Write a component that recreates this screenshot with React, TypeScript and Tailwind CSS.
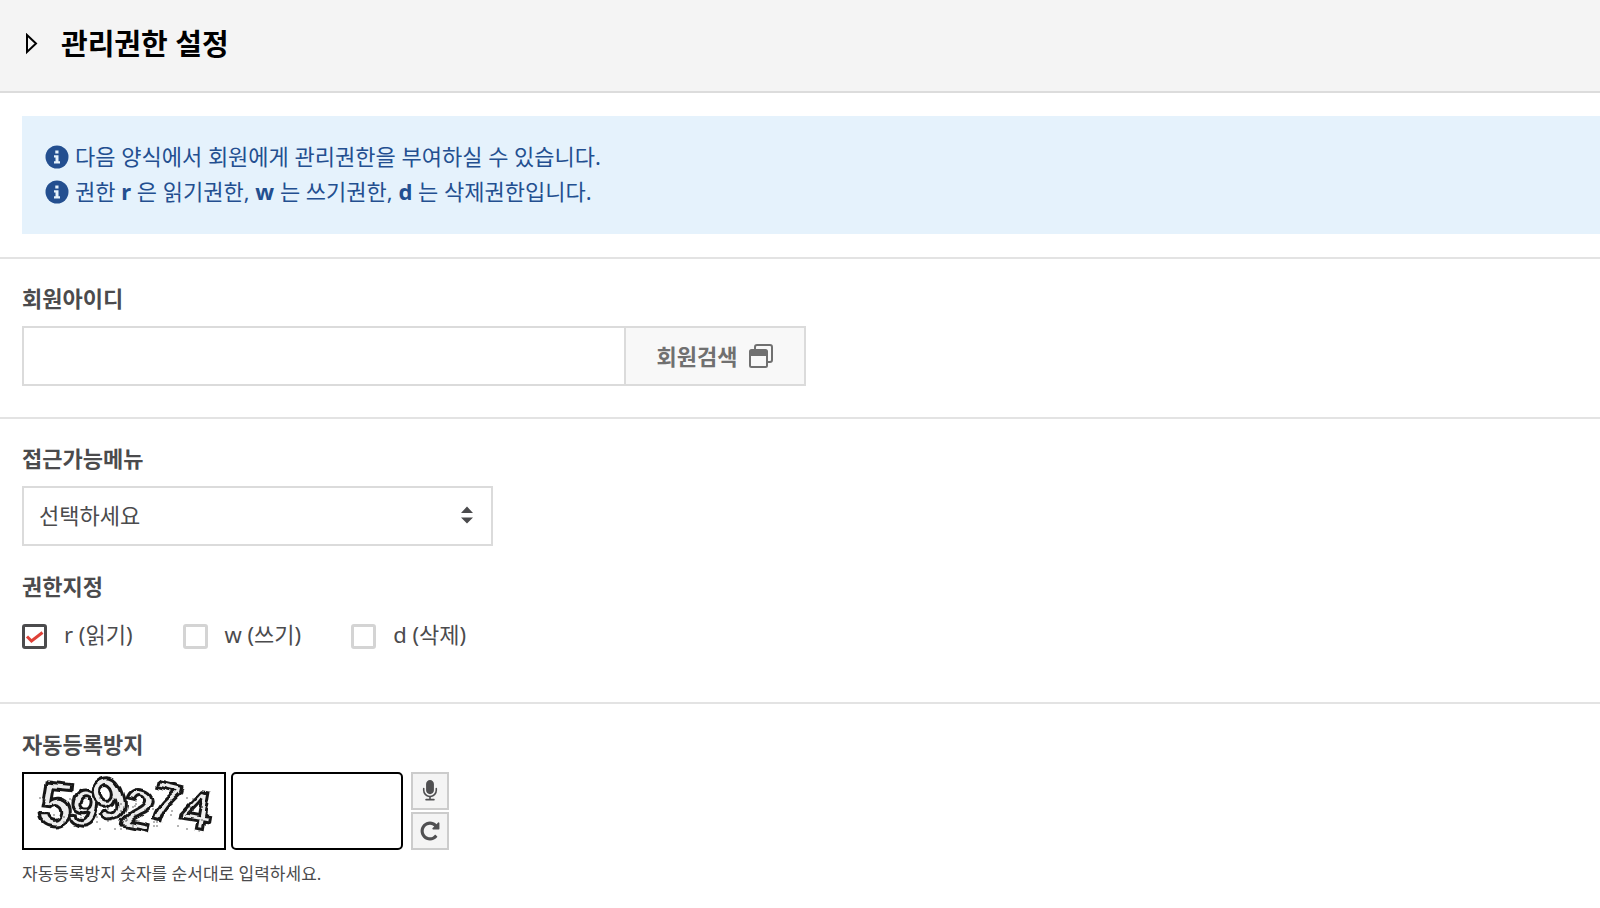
import { useState } from "react";
import type { ReactNode } from "react";

const PERMISSIONS = [
  { key: "r", label: "r (읽기)" },
  { key: "w", label: "w (쓰기)" },
  { key: "d", label: "d (삭제)" },
];

const DIGITS = [
  { ch: "5", x: 15, y: 51, size: 60, rotate: 6 },
  { ch: "9", x: 46, y: 52, size: 50, rotate: 16 },
  { ch: "9", x: 70, y: 46, size: 60, rotate: -20 },
  { ch: "2", x: 99, y: 54, size: 54, rotate: 12 },
  { ch: "7", x: 126, y: 47, size: 54, rotate: 14 },
  { ch: "4", x: 158, y: 54, size: 54, rotate: 10 },
];

const SPECKS = Array.from({ length: 80 }, (_, i) => ({
  x: 16 + ((i * i * 7 + i * 61) % 171),
  y: 24 + ((i * i * 3 + i * 17) % 33),
}));

function InfoIcon() {
  return (
    <svg viewBox="0 0 24 24" className="h-6 w-6 shrink-0" aria-hidden="true">
      <circle cx="12" cy="12" r="11.5" fill="currentColor" />
      <path d="M10.3 5.500h3.200v3h-3.200zM9 10.200h4.500v6H15v2.300H9v-2.300h1.500v-3.700H9z" fill="#e5f2fc" />
    </svg>
  );
}

function WindowsIcon() {
  return (
    <svg viewBox="0 0 24 24" className="h-6 w-6" fill="none" stroke="currentColor" strokeWidth="2" aria-hidden="true">
      <path d="M6 5V3a2 2 0 0 1 2-2h13a2 2 0 0 1 2 2v13a2 2 0 0 1-2 2h-2" />
      <rect x="1" y="6" width="17" height="17" rx="1.5" />
      <path d="M1 6h17v6H1z" fill="currentColor" stroke="none" />
    </svg>
  );
}

function MicIcon() {
  return (
    <svg viewBox="0 0 1792 1792" className="h-[22px] w-[22px]" fill="currentColor" aria-hidden="true">
      <path d="M1472 704v128q0 221-147.500 384.500t-364.500 187.500v132h256q26 0 45 19t19 45-19 45-45 19h-640q-26 0-45-19t-19-45 19-45 45-19h256v-132q-217-24-364.500-187.500t-147.500-384.500v-128q0-26 19-45t45-19 45 19 19 45v128q0 185 131.500 316.500t316.500 131.500 316.500-131.500 131.500-316.500v-128q0-26 19-45t45-19 45 19 19 45zm-256-384v512q0 132-94 226t-226 94-226-94-94-226v-512q0-132 94-226t226-94 226 94 94 226z" />
    </svg>
  );
}

function RepeatIcon() {
  return (
    <svg viewBox="0 0 1792 1792" className="h-[22px] w-[22px]" fill="currentColor" aria-hidden="true">
      <path d="M1664 256v448q0 26-19 45t-45 19h-448q-42 0-59-40-17-39 14-69l138-138q-148-137-349-137-104 0-198.500 40.500t-163.500 109.500-109.500 163.500-40.500 198.500 40.500 198.500 109.500 163.500 163.500 109.500 198.500 40.500q119 0 225-52t179-147q7-10 23-12 15 0 25 9l137 138q9 8 9.500 20.500t-7.500 22.500q-109 132-264 204.500t-327 72.500q-156 0-298-61t-245-164-164-245-61-298 61-298 164-245 245-164 298-61q147 0 284.500 55.500t244.500 156.500l130-129q29-31 70-14 39 17 39 59z" />
    </svg>
  );
}

function CaptchaImage() {
  return (
    <svg viewBox="0 0 200 74" className="h-full w-full overflow-visible" role="img" aria-label="자동등록방지 숫자">
      <filter id="wave" x="-5%" y="-5%" width="110%" height="110%">
        <feTurbulence type="fractalNoise" baseFrequency="0.04" numOctaves="2" seed="4" result="noise" />
        <feDisplacementMap in="SourceGraphic" in2="noise" scale="9" xChannelSelector="R" yChannelSelector="G" />
        <feGaussianBlur stdDeviation="0.6" />
      </filter>
      <g filter="url(#wave)" fontFamily="Liberation Sans, sans-serif" fontWeight="700">
        {DIGITS.map((d, i) => (
          <text
            key={i}
            x={d.x}
            y={d.y}
            fontSize={d.size}
            transform={`rotate(${d.rotate} ${d.x + 14} ${d.y - 18})`}
            fill="#ededed"
            stroke="#151515"
            strokeWidth="3"
          >
            {d.ch}
          </text>
        ))}
      </g>
      {SPECKS.map((s, i) => (
        <circle key={i} cx={s.x} cy={s.y} r="0.7" fill="#333333" />
      ))}
    </svg>
  );
}

function Section({ children }: { children: ReactNode }) {
  return <section className="border-b-2 border-[#e3e3e3] px-[22px] pt-[23px] pb-[31px]">{children}</section>;
}

export default function App() {
  const [memberId, setMemberId] = useState("");
  const [captcha, setCaptcha] = useState("");
  const [granted, setGranted] = useState<string[]>(["r"]);

  const toggle = (key: string) =>
    setGranted((prev) => (prev.includes(key) ? prev.filter((k) => k !== key) : [...prev, key]));

  return (
    <main className="bg-white font-['Noto_Sans','Noto_Sans_CJK_KR',sans-serif] text-[22px] leading-8 text-[#4b4b4d]">
      <header className="flex items-center gap-[23px] border-b-2 border-[#dcdcdc] bg-[#f4f4f4] px-6 pt-[21px] pb-[25px] text-black">
        <svg viewBox="0 0 14 22" className="h-[22px] w-[14px]" fill="none" stroke="currentColor" strokeWidth="2" aria-hidden="true">
          <path d="M3 2v17L12 10.500z" />
        </svg>
        <h1 className="text-[29px] leading-[45px] font-bold">관리권한 설정</h1>
      </header>

      <div className="border-b-2 border-[#e3e3e3] py-[23px] pl-[22px]">
        <div className="bg-[#e5f2fc] pt-[23px] pr-6 pb-[25px] pl-[23px] text-[#234f90]">
          <p className="flex items-center gap-1.5 leading-[35px]">
            <InfoIcon />
            <span>다음 양식에서 회원에게 관리권한을 부여하실 수 있습니다.</span>
          </p>
          <p className="flex items-center gap-1.5 leading-[35px]">
            <InfoIcon />
            <span>
              권한 <strong>r</strong> 은 읽기권한, <strong>w</strong> 는 쓰기권한, <strong>d</strong> 는 삭제권한입니다.
            </span>
          </p>
        </div>
      </div>

      <form onSubmit={(e) => e.preventDefault()}>
        <Section>
          <label htmlFor="member-id" className="mb-3 block w-fit font-bold">
            회원아이디
          </label>
          <div className="flex h-[60px] w-full max-w-[784px]">
            <input
              id="member-id"
              type="text"
              value={memberId}
              onChange={(e) => setMemberId(e.target.value)}
              className="min-w-0 flex-1 border-2 border-r-0 border-[#dbdbdb] bg-white px-4 outline-none"
            />
            <button
              type="button"
              className="flex w-[182px] items-center justify-center gap-3 border-2 border-[#dbdbdb] bg-[#f8f8f8] pb-px font-bold text-[#707070]"
            >
              회원검색
              <WindowsIcon />
            </button>
          </div>
        </Section>

        <Section>
          <label htmlFor="menu" className="mb-3 block w-fit font-bold">
            접근가능메뉴
          </label>
          <div className="relative w-full max-w-[471px]">
            <select
              id="menu"
              className="h-[60px] w-full appearance-none border-2 border-[#dbdbdb] bg-white px-[15px] pb-0.5 outline-none"
            >
              <option>선택하세요</option>
            </select>
            <svg
              viewBox="0 0 12 18"
              className="pointer-events-none absolute top-5 right-5 h-[18px] w-3"
              fill="currentColor"
              aria-hidden="true"
            >
              <path d="M0 7l6-6.500L12 7zM0 11.500h12L6 17.500z" />
            </svg>
          </div>

          <fieldset className="mt-6 pb-[21px]">
            <legend className="mb-4 font-bold">권한지정</legend>
            <div className="flex flex-wrap gap-x-[50px]">
              {PERMISSIONS.map((p) => (
                <label key={p.key} className="flex items-start gap-[17px]">
                  <span className="relative mt-1.5 flex">
                    <input
                      type="checkbox"
                      checked={granted.includes(p.key)}
                      onChange={() => toggle(p.key)}
                      className="peer h-[25px] w-[25px] appearance-none rounded-[3px] border-3 border-[#d4d4d4] bg-white checked:border-[#4b4b4d]"
                    />
                    <svg
                      viewBox="0 0 25 25"
                      className="pointer-events-none absolute inset-0 hidden text-[#df4138] peer-checked:block"
                      fill="none"
                      stroke="currentColor"
                      strokeWidth="3"
                      aria-hidden="true"
                    >
                      <path d="M5 12.500l4.500 4.500L20.500 8.500" />
                    </svg>
                  </span>
                  {p.label}
                </label>
              ))}
            </div>
          </fieldset>
        </Section>

        <section className="px-[22px] pt-6">
          <label htmlFor="captcha" className="mb-3 block w-fit font-bold">
            자동등록방지
          </label>
          <div className="flex h-[78px]">
            <div className="w-[204px] border-2 border-black bg-white">
              <CaptchaImage />
            </div>
            <input
              id="captcha"
              type="text"
              value={captcha}
              onChange={(e) => setCaptcha(e.target.value)}
              className="ml-[5px] w-[172px] rounded-[5px] border-2 border-black bg-white px-4 outline-none"
            />
            <div className="ml-2 flex flex-col justify-between text-[#505052]">
              <button
                type="button"
                aria-label="숫자음성듣기"
                className="flex h-[38px] w-[38px] items-center justify-center border-2 border-[#cccccc] bg-[#f4f4f4]"
              >
                <MicIcon />
              </button>
              <button
                type="button"
                aria-label="새로고침"
                className="flex h-[38px] w-[38px] items-center justify-center border-2 border-[#cccccc] bg-[#f4f4f4]"
              >
                <RepeatIcon />
              </button>
            </div>
          </div>
          <p className="mt-2 text-[17px]">자동등록방지 숫자를 순서대로 입력하세요.</p>
        </section>
      </form>
    </main>
  );
}
